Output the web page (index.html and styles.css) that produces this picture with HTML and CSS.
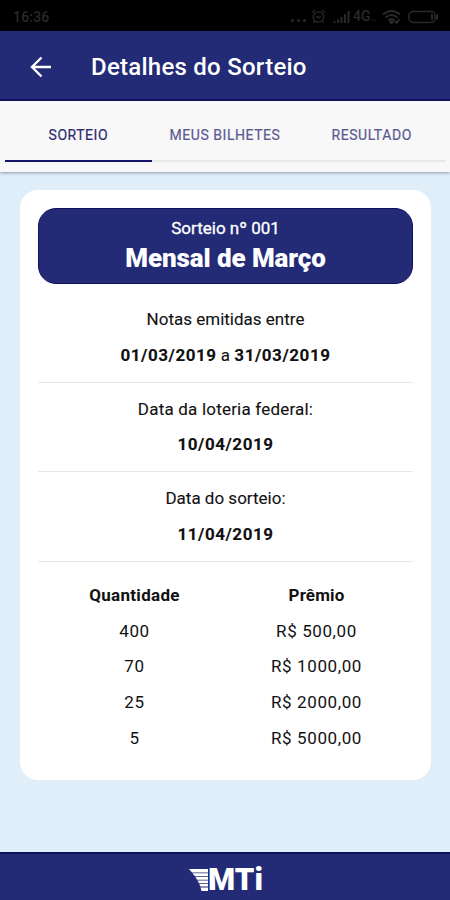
FILE: index.html
```html
<!DOCTYPE html>
<html lang="pt-BR">
<head>
  <meta charset="UTF-8">
  <title>Detalhes do Sorteio</title>
  <link rel="stylesheet" href="styles.css">
</head>
<body>

<div class="status">
  <span class="clock">16:36</span>
  <span class="dots"><i></i><i></i><i></i></span>
  <svg class="alarm" width="15" height="15" viewBox="0 0 15 15" fill="none" stroke="currentColor" stroke-width="1.3">
    <circle cx="7.5" cy="8" r="5.2"/><path d="M1 3.5 4 1M14 3.5 11 1M5 7l2.5 2L10 7M3.7 12 2.5 14M11.3 12l1.2 2"/>
  </svg>
  <svg class="signal" width="17" height="13" viewBox="0 0 17 13" fill="none" stroke="currentColor" stroke-width="2">
    <path d="M1.5 13v-2M5 13V9.500M8.500 13V7M12 13V4M15.500 13V1"/>
  </svg>
  <span class="net">4G<small>..</small></span>
  <svg class="wifi" width="19" height="14" viewBox="0 0 19 14" fill="none" stroke="currentColor" stroke-width="1.8">
    <path d="M1 4.500q8.500-7 17 0M3.500 7.500q6-5 12 0M6.500 10.200q3-2.500 6 0"/><path d="M8 11.500h3L9.500 13.500zM13 11l1.500 2 3-4"/>
  </svg>
  <svg class="battery" width="31" height="14" viewBox="0 0 31 14" fill="none" stroke="currentColor" stroke-width="1.5">
    <rect x="1" y="1.500" width="26" height="11" rx="4"/><path d="M24 4v6M29 4.500v5" stroke-width="2"/>
  </svg>
</div>

<header>
  <svg class="back" width="22" height="22" viewBox="0 0 22 22" fill="none" stroke="#fff" stroke-width="2.400">
    <path d="M21 11H2M11.500 1.500 2 11l9.500 9.500"/>
  </svg>
  <h1>Detalhes do Sorteio</h1>
</header>

<nav>
  <a class="tab active">SORTEIO</a>
  <a class="tab">MEUS BILHETES</a>
  <a class="tab">RESULTADO</a>
</nav>

<main>
  <section class="card">
    <div class="banner">
      <p>Sorteio nº 001</p>
      <h2>Mensal de Março</h2>
    </div>
    <div class="info">
      <p>Notas emitidas entre</p>
      <p><b>01/03/2019</b> a <b>31/03/2019</b></p>
    </div>
    <div class="info federal">
      <p>Data da loteria federal:</p>
      <p><b>10/04/2019</b></p>
    </div>
    <div class="info">
      <p>Data do sorteio:</p>
      <p><b>11/04/2019</b></p>
    </div>
    <div class="prizes">
      <b>Quantidade</b><b class="narrow">Prêmio</b>
      <span>400</span><span>R$ 500,00</span>
      <span>70</span><span>R$ 1000,00</span>
      <span>25</span><span>R$ 2000,00</span>
      <span>5</span><span>R$ 5000,00</span>
    </div>
  </section>
</main>

<footer>
  <svg class="wing" width="19" height="22" viewBox="0 0 19 22" fill="#fff">
    <path d="M0 0h19v3.400H3zM3.500 4.200H19v3H6zM6.500 8H19v2.800H8zM8.500 11.600H19v2.600h-9zM10.300 15H19v2.600h-7.500zM11.500 18.400H19V22h-6.500z"/>
  </svg>
  <span class="logo">MTi</span>
</footer>

</body>
</html>
```
FILE: styles.css
```css
body {
  font: 17px/36px Roboto, sans-serif;
  margin: 0;
  height: 900px;
  display: flex;
  flex-direction: column;
  background: #e0eefa;
  color: #111;
  overflow: hidden;
}
h1, h2, p { margin: 0; }

.status {
  display: flex;
  align-items: center;
  box-sizing: border-box;
  height: 31px;
  padding: 2px 11px 0 13px;
  background: #000;
  color: #292929;
  line-height: 28px;
}
.clock { font-size: 14px; font-weight: 500; margin-right: auto; letter-spacing: 0.2px; }
.dots { display: flex; gap: 3px; margin: 7px 5px 0 0; }
.dots i { width: 3px; height: 3px; border-radius: 50%; background: #292929; }
.signal { margin-left: 7px; }
.net { font-size: 14px; font-weight: 500; margin-left: 3px; width: 26px; }
.net small { font-size: 10px; }
.wifi { margin-left: 3px; }
.battery { margin-left: 7px; }

header {
  display: flex;
  align-items: center;
  box-sizing: border-box;
  height: 70px;
  padding: 4px 0 0 30px;
  background: #232b76;
  border-bottom: 2px solid #10105f;
  color: #fff;
}
h1 { font-size: 24px; font-weight: 500; margin-left: 39px; letter-spacing: 0.25px; }

nav {
  position: relative;
  display: grid;
  grid-template-columns: repeat(3, 1fr);
  box-sizing: border-box;
  height: 71px;
  padding: 0 5px;
  background: #f8f8f8;
  box-shadow: 0 1px 3px rgba(50, 70, 85, 0.5);
}
.tab {
  height: 59px;
  font-size: 14px;
  line-height: 69px;
  text-align: center;
  letter-spacing: 0.55px;
  color: #5b5a93;
  border-bottom: 2px solid #e8e8e8;
  -webkit-text-stroke: 0.2px;
}
.active { color: #2c2b70; border-color: #17156a; }

main { flex: 1; padding: 18px 19px 0 20px; }
.card {
  box-sizing: border-box;
  height: 590px;
  padding: 18px;
  border-radius: 18px;
  background: #fff;
}
.banner {
  box-sizing: border-box;
  height: 76px;
  padding-top: 6px;
  margin-bottom: 9px;
  border: 1px solid #10105f;
  border-radius: 18px;
  background: #232b76;
  color: #fff;
  text-align: center;
}
.banner p { font-size: 17px; line-height: 26px; -webkit-text-stroke: 0.3px; }
h2 { font-size: 26px; line-height: 35px; font-weight: 900; letter-spacing: -0.1px; }

.info {
  box-sizing: border-box;
  height: 89.700px;
  padding-top: 9px;
  border-bottom: 1px solid #e8e8e8;
  text-align: center;
}
.info p { line-height: 35.500px; -webkit-text-stroke: 0.1px; }
.info b { letter-spacing: 0.55px; }
.federal p { letter-spacing: 0.2px; }

.prizes {
  display: grid;
  grid-template-columns: 193px 171px;
  grid-auto-rows: 35.700px;
  padding-top: 15px;
  text-align: center;
  letter-spacing: 0.6px;
}
.prizes b { letter-spacing: 0.3px; }
.prizes .narrow { letter-spacing: 0.15px; }

footer {
  display: flex;
  justify-content: center;
  align-items: center;
  box-sizing: border-box;
  height: 48px;
  padding: 5px 0 0 2px;
  background: #232b76;
  border-top: 2px solid #10105f;
  color: #fff;
}
.logo { font: 900 31px/30px Roboto, sans-serif; }
```
